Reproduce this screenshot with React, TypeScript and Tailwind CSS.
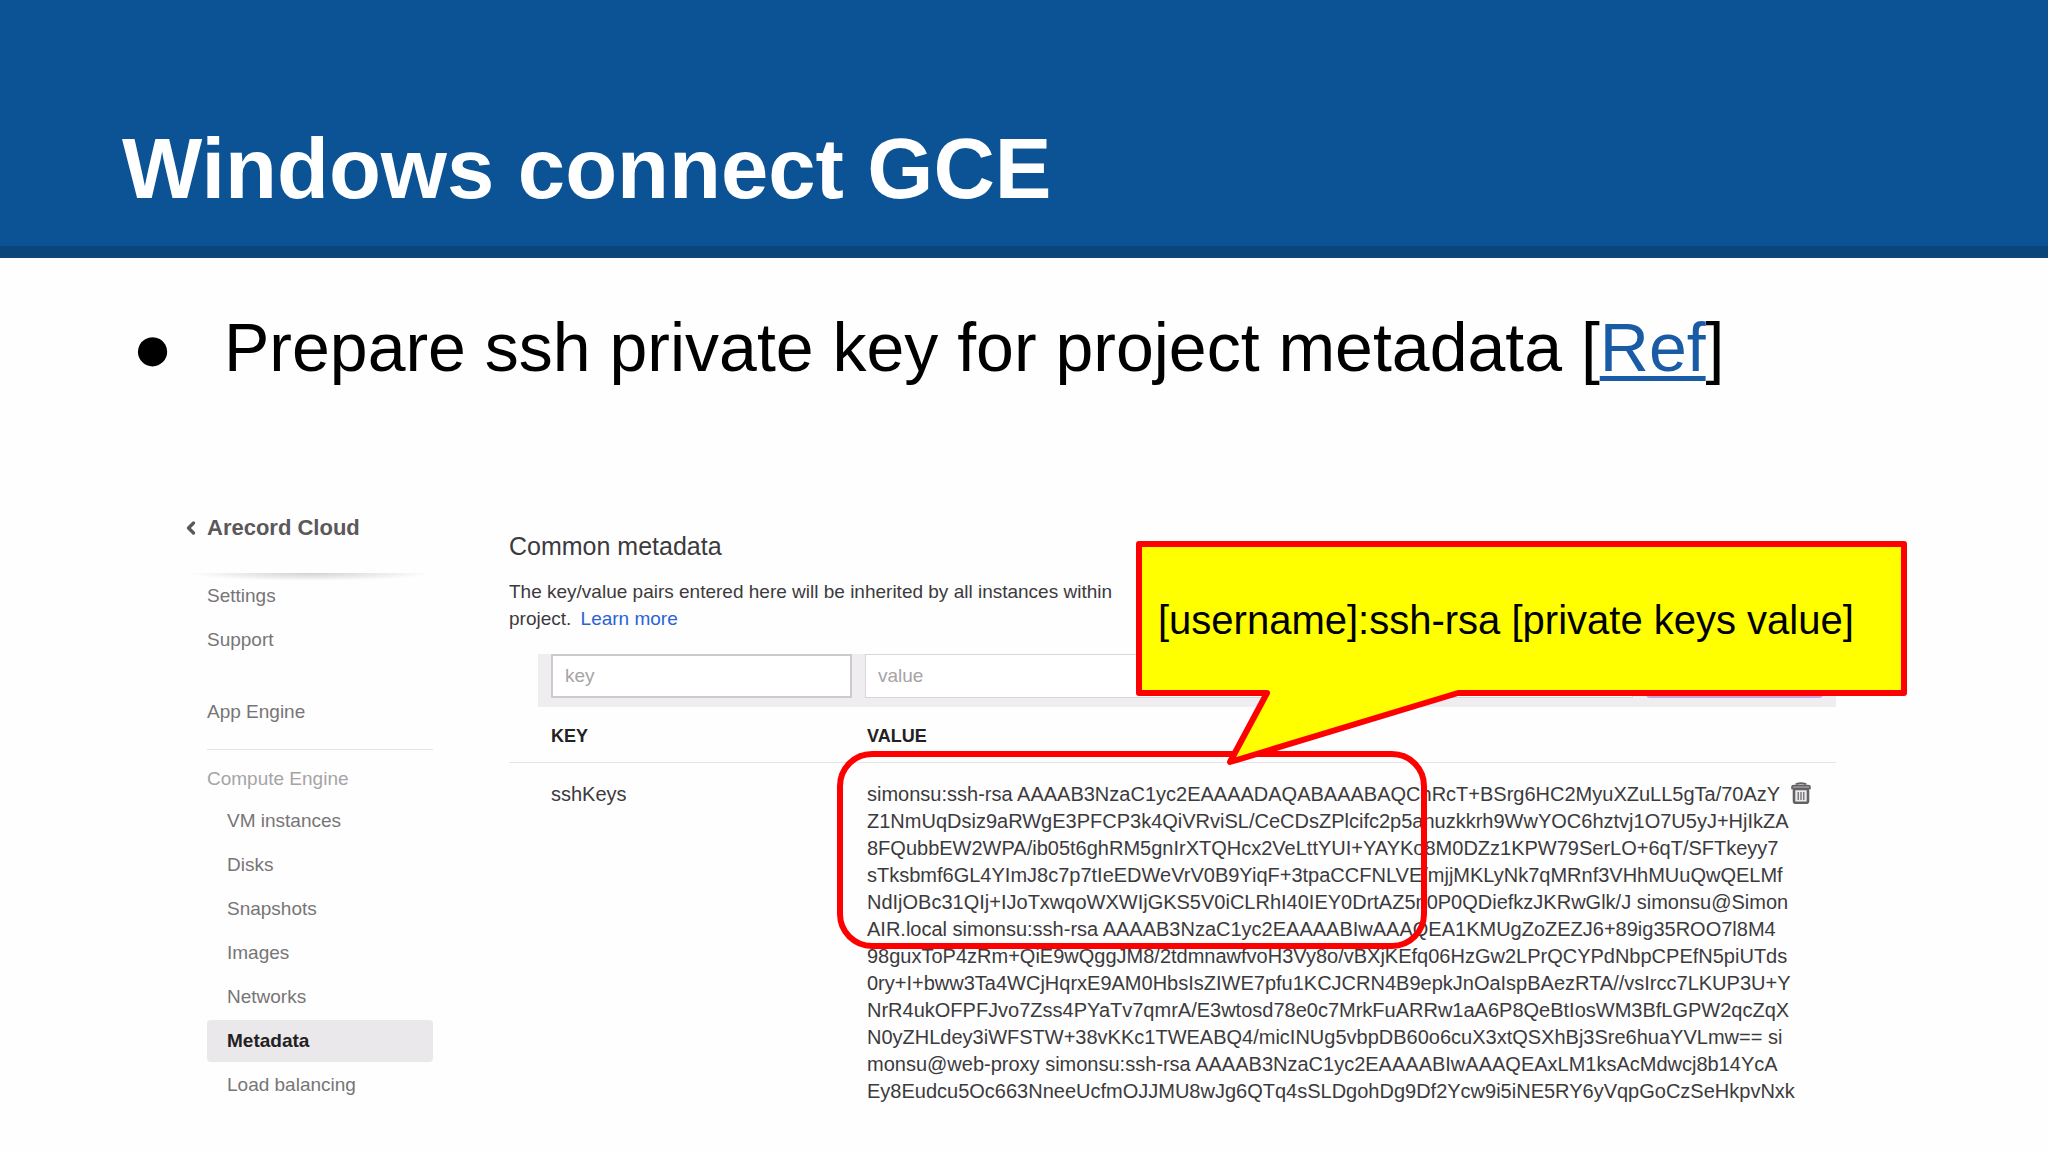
import { ChevronLeft } from 'lucide-react'

const GENERAL = ['Settings', 'Support']
const COMPUTE = ['VM instances', 'Disks', 'Snapshots', 'Images', 'Networks', 'Metadata', 'Load balancing']

const SSH_KEYS = [
  'simonsu:ssh-rsa AAAAB3NzaC1yc2EAAAADAQABAAABAQChRcT+BSrg6HC2MyuXZuLL5gTa/70AzY',
  'Z1NmUqDsiz9aRWgE3PFCP3k4QiVRviSL/CeCDsZPlcifc2p5anuzkkrh9WwYOC6hztvj1O7U5yJ+HjIkZA',
  '8FQubbEW2WPA/ib05t6ghRM5gnIrXTQHcx2VeLttYUI+YAYKo8M0DZz1KPW79SerLO+6qT/SFTkeyy7',
  'sTksbmf6GL4YImJ8c7p7tIeEDWeVrV0B9YiqF+3tpaCCFNLVE/mjjMKLyNk7qMRnf3VHhMUuQwQELMf',
  'NdIjOBc31QIj+IJoTxwqoWXWIjGKS5V0iCLRhI40IEY0DrtAZ5n0P0QDiefkzJKRwGlk/J simonsu@Simon',
  'AIR.local simonsu:ssh-rsa AAAAB3NzaC1yc2EAAAABIwAAAQEA1KMUgZoZEZJ6+89ig35ROO7l8M4',
  '98guxToP4zRm+QiE9wQggJM8/2tdmnawfvoH3Vy8o/vBXjKEfq06HzGw2LPrQCYPdNbpCPEfN5piUTds',
  '0ry+I+bww3Ta4WCjHqrxE9AM0HbsIsZIWE7pfu1KCJCRN4B9epkJnOaIspBAezRTA//vsIrcc7LKUP3U+Y',
  'NrR4ukOFPFJvo7Zss4PYaTv7qmrA/E3wtosd78e0c7MrkFuARRw1aA6P8QeBtIosWM3BfLGPW2qcZqX',
  'N0yZHLdey3iWFSTW+38vKKc1TWEABQ4/micINUg5vbpDB60o6cuX3xtQSXhBj3Sre6huaYVLmw== si',
  'monsu@web-proxy simonsu:ssh-rsa AAAAB3NzaC1yc2EAAAABIwAAAQEAxLM1ksAcMdwcj8b14YcA',
  'Ey8Eudcu5Oc663NneeUcfmOJJMU8wJg6QTq4sSLDgohDg9Df2Ycw9i5iNE5RY6yVqpGoCzSeHkpvNxk',
]

function TrashIcon() {
  return (
    <svg viewBox="0 0 20 22" className="h-[22px] w-5" fill="none" stroke="#636163" strokeWidth="2" aria-hidden="true">
      <path d="M5 2.5 C6 0.8 14 0.8 15 2.5" />
      <path d="M1 6.5 V5 Q1 3.6 3 3.6 H17 Q19 3.6 19 5 V6.5 Z" fill="#b5b3b5" strokeWidth="1.6" />
      <path d="M3 7 V19.3 Q3 20.8 4.5 20.8 H15.5 Q17 20.8 17 19.3 V7 Z" fill="#eceaec" strokeWidth="2.6" />
      <path d="M7.2 10 V18 M10 10 V18 M12.8 10 V18" strokeWidth="1.2" />
    </svg>
  )
}

function Sidebar() {
  return (
    <nav className="w-[246px] shrink-0 text-[19px] text-[#777577]">
      <a href="#" className="flex items-center text-[22px] leading-7 font-bold text-[#5a585a]">
        <ChevronLeft size={20} strokeWidth={4} className="-ml-1.5 mr-1.5 w-5" aria-hidden="true" />
        Arecord Cloud
      </a>
      <div className="mt-[31px] -mb-1.5 h-2 bg-[radial-gradient(ellipse_at_top,#d2d0d2_0%,#efeeef_45%,transparent_70%)]" />
      <ul className="ml-5 flex flex-col gap-0.5">
        {GENERAL.map((label) => (
          <li key={label}>
            <a href="#" className="flex h-[42px] items-center">{label}</a>
          </li>
        ))}
      </ul>
      <div className="ml-5 mt-[30px] border-b border-[#e6e4e6] pb-4">
        <a href="#" className="flex h-[42px] items-center">App Engine</a>
      </div>
      <div className="ml-5 mt-2">
        <h3 className="flex h-[42px] items-center text-[#a6a4a6]">Compute Engine</h3>
        <ul className="flex flex-col gap-0.5">
          {COMPUTE.map((label) => (
            <li key={label}>
              <a
                href="#"
                className={`flex h-[42px] items-center rounded-sm pl-5 ${
                  label === 'Metadata' ? 'bg-[#eae8eb] font-bold text-[#222]' : ''
                }`}
              >
                {label}
              </a>
            </li>
          ))}
        </ul>
      </div>
    </nav>
  )
}

function MetadataPanel() {
  return (
    <section className="min-w-0 flex-1 pt-4 text-[19px] leading-[27px] text-[#3c3a3c]">
      <h2 className="text-[25px] leading-8">Common metadata</h2>
      <p className="mt-4">
        The key/value pairs entered here will be inherited by all instances within
        <br />
        project. <a href="#" className="ml-1 text-[#2a62d8]">Learn more</a>
      </p>

      <form className="ml-[29px] mt-[22px] flex gap-[13px] bg-[#efedef] px-[13px] pb-[9px]">
        <input
          aria-label="key"
          placeholder="key"
          className="h-11 w-[301px] border-2 border-[#cccacd] bg-white px-3 placeholder:text-[#a6a4a6]"
        />
        <input
          aria-label="value"
          placeholder="value"
          className="h-11 min-w-0 flex-1 border border-[#d8d6d9] bg-white px-3 placeholder:text-[#a6a4a6]"
        />
        <button type="button" aria-label="Add" className="h-11 w-[177px] rounded-sm bg-[#c4a8e0]" />
      </form>

      <table className="w-full table-fixed text-left">
        <thead>
          <tr className="border-b border-[#e6e4e6] text-[18px] text-[#222]">
            <th className="w-[358px] pt-4 pb-3 pl-[42px]">KEY</th>
            <th className="pt-4 pb-3">VALUE</th>
            <th className="w-[45px]" />
          </tr>
        </thead>
        <tbody>
          <tr className="align-top text-[20px]">
            <td className="pt-[18px] pl-[42px]">sshKeys</td>
            <td className="pt-[18px] whitespace-nowrap">
              {SSH_KEYS.map((line) => (
                <div key={line}>{line}</div>
              ))}
            </td>
            <td className="pt-[19px]">
              <button type="button" aria-label="Delete sshKeys" className="block">
                <TrashIcon />
              </button>
            </td>
          </tr>
        </tbody>
      </table>
    </section>
  )
}

/** Yellow speech bubble whose tail points at the highlighted key. */
function Callout() {
  return (
    <div className="absolute left-[949px] top-[27px] flex h-[155px] w-[771px] items-center pt-0.5 pl-[22px]">
      <svg
        viewBox="0 0 771 226"
        className="absolute left-0 top-0 h-[226px] w-[771px]"
        fill="#ffff00"
        stroke="#ff0000"
        strokeWidth="6"
        strokeLinejoin="round"
        aria-hidden="true"
      >
        <path d="M3 3 H768 V152 H322 L94 221 L131 152 H3 Z" />
      </svg>
      <span className="relative text-[40px] leading-[48px] whitespace-nowrap text-black">
        [username]:ssh-rsa [private keys value]
      </span>
    </div>
  )
}

export default function App() {
  return (
    <div className="min-h-screen bg-[#fefefe] font-['Liberation_Sans',Arial,sans-serif]">
      <header className="border-b-12 border-[#0a467a] bg-[#0b5394] px-[122px] pt-[121px] pb-[29px]">
        <h1 className="text-[85px] leading-[96px] font-bold text-white">Windows connect GCE</h1>
      </header>

      <main>
        <ul className="px-[132px] pt-[49px] text-[68px] leading-[80px] text-black">
          <li className="flex">
            <span className="w-[92px]" aria-hidden="true">●</span>
            <span>
              Prepare ssh private key for project metadata [
              <a href="#" className="text-[#1a5ba6] underline decoration-[5px] underline-offset-[5px]">Ref</a>]
            </span>
          </li>
        </ul>

        <div className="relative mt-[127px] mr-[212px] ml-[187px] flex gap-[76px]">
          <Sidebar />
          <MetadataPanel />
          <div className="absolute left-[650px] top-[237px] h-[198px] w-[590px] rounded-[35px] border-6 border-[#ff0000]" />
          <Callout />
        </div>
      </main>
    </div>
  )
}
